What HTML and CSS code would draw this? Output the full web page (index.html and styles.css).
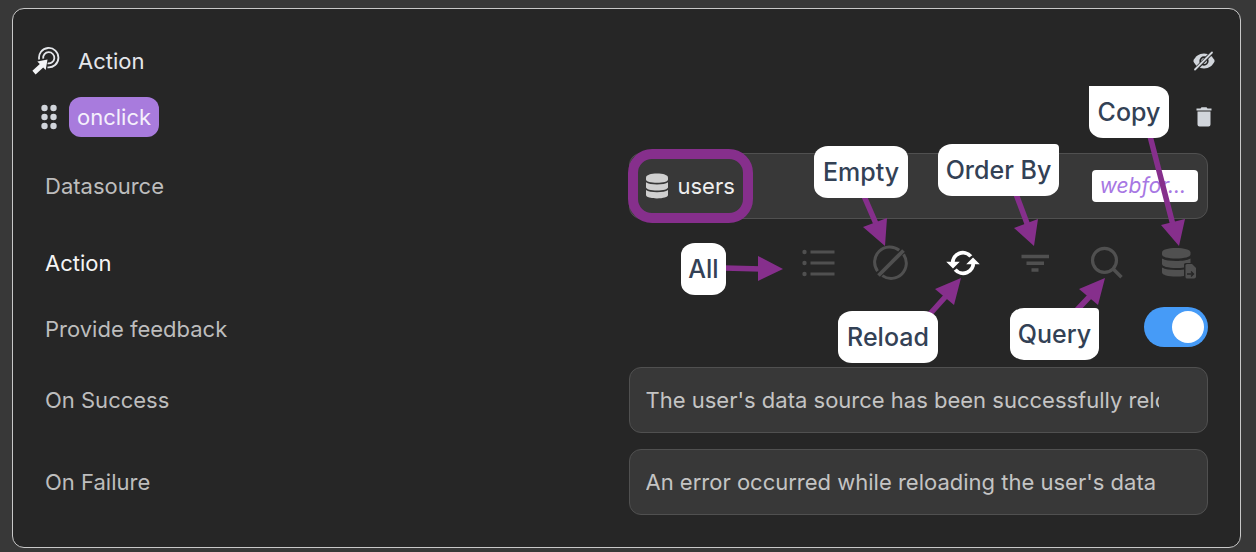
FILE: index.html
```html
<!DOCTYPE html>
<html lang="en">
<head>
<meta charset="utf-8">
<meta name="viewport" content="width=device-width, initial-scale=1">
<title>Action</title>
<link rel="stylesheet" href="styles.css">
</head>
<body>
<main class="panel">
  <header class="bar">
    <svg class="icon-target" viewBox="0 0 28 28" aria-hidden="true">
      <g fill="none" stroke="#e5e7eb" stroke-width="1.8">
        <path d="M7.200 12.500A9.700 9.700 0 1 1 15.500 20.300"/>
        <path d="M11.200 11.600A5.600 5.600 0 1 1 15.600 16.300"/>
      </g>
      <path fill="#f3f4f6" d="M15.500 12.600 5.300 14.600l2.500 2.300L.4 23.800l3.200 3.600 7.600-7 2.500 2.700z"/>
    </svg>
    <h1 class="bar-title">Action</h1>
    <button class="icon-button" type="button" aria-label="Hide">
      <svg width="22" height="20" viewBox="0 0 22 20" aria-hidden="true">
        <path fill="#d1d5db" d="M11 2.500c5 0 8.800 2.900 10.700 7.500-1.900 4.600-5.700 7.500-10.700 7.500S2.200 14.600.3 10C2.200 5.400 6 2.500 11 2.500z"/>
        <circle cx="11" cy="10" r="3.800" fill="none" stroke="#262626" stroke-width="1.700"/>
        <path stroke="#262626" stroke-width="3.800" d="M2 19 19.500 1"/>
        <path stroke="#d1d5db" stroke-width="1.800" stroke-linecap="round" d="M2 18.500 19 1.500"/>
      </svg>
    </button>
  </header>

  <div class="bar bar-event">
    <svg class="icon-grip" viewBox="0 0 16 26" fill="#d1d5db" aria-hidden="true">
      <circle cx="3.500" cy="4" r="3.200"/><circle cx="12.500" cy="4" r="3.200"/>
      <circle cx="3.500" cy="13" r="3.200"/><circle cx="12.500" cy="13" r="3.200"/>
      <circle cx="3.500" cy="22" r="3.200"/><circle cx="12.500" cy="22" r="3.200"/>
    </svg>
    <span class="event">onclick</span>
    <button class="icon-button" type="button" aria-label="Delete">
      <svg width="16" height="20" viewBox="0 0 16 20" fill="#d1d5db" aria-hidden="true">
        <path d="M.5 1.500H4.500L5.500.3h5l1 1.200h4v2H.5zM1.500 4.500h13V17.500a2 2 0 0 1-2 2h-9a2 2 0 0 1-2-2z"/>
      </svg>
    </button>
  </div>

  <form class="settings">
    <div class="row row-field">
      <span class="label">Datasource</span>
      <div class="field">
        <span class="source">
          <svg width="22" height="26" viewBox="0 0 22 26" fill="#d0d0d0" aria-hidden="true">
            <path d="M0 4.500C0 2 5 .5 11 .5S22 2 22 4.500v2C22 8.600 17 9.800 11 9.800S0 8.600 0 6.500z"/>
            <path d="M0 9.300c2 1.500 6 2.200 11 2.200s9-.7 11-2.200v5c0 2-5 3.300-11 3.300S0 16.300 0 14.300z"/>
            <path d="M0 17.100c2 1.500 6 2.200 11 2.200s9-.7 11-2.200v5c0 2-5 3.400-11 3.400S0 24.100 0 22.100z"/>
          </svg>
          users
        </span>
        <span class="chip">webfor...</span>
      </div>
    </div>

    <div class="row row-action">
      <span class="label label-strong">Action</span>
      <div class="tools">
        <button class="tool" type="button" aria-label="All">
          <svg viewBox="0 0 36 36" aria-hidden="true">
            <g fill="currentColor"><circle cx="3.500" cy="7" r="2.200"/><circle cx="3.500" cy="18" r="2.200"/><circle cx="3.500" cy="29" r="2.200"/></g>
            <path stroke="currentColor" stroke-width="2.800" d="M9.500 7h24M9.500 18h24M9.500 29h24"/>
          </svg>
        </button>
        <button class="tool" type="button" aria-label="Empty">
          <svg viewBox="0 0 36 36" fill="none" stroke="currentColor" stroke-width="3" aria-hidden="true">
            <path d="M26.200 5.200A15.200 15.200 0 0 0 4.600 26.200M9.300 30.600A15.200 15.200 0 0 0 30.500 9.400"/>
            <path stroke-width="3.800" d="M5.500 30.500 30.500 5.500"/>
          </svg>
        </button>
        <button class="tool tool-active" type="button" aria-label="Reload">
          <svg viewBox="0 0 36 36" aria-hidden="true">
            <g fill="none" stroke="currentColor" stroke-width="3.800">
              <path d="M7.800 19A10.200 10.200 0 0 1 25.800 11.400"/>
              <path d="M28.200 17A10.200 10.200 0 0 1 10.200 24.600"/>
            </g>
            <path fill="currentColor" d="M1.200 16.800h13.600L8 23.600zM21.200 19.200h13.600L28 12.400z"/>
          </svg>
        </button>
        <button class="tool" type="button" aria-label="Order By">
          <svg viewBox="0 0 36 36" stroke="currentColor" stroke-width="3.600" aria-hidden="true">
            <path d="M4.500 11.500h27.500M9.500 18.200h17.500M14.500 25h7"/>
          </svg>
        </button>
        <button class="tool" type="button" aria-label="Query">
          <svg viewBox="0 0 36 36" fill="none" stroke="currentColor" aria-hidden="true">
            <circle cx="15.500" cy="15.300" r="12" stroke-width="3.200"/>
            <path stroke-width="3.600" d="M24 23.800 32.500 32.300"/>
          </svg>
        </button>
        <button class="tool" type="button" aria-label="Copy">
          <svg viewBox="0 0 36 36" fill="currentColor" aria-hidden="true">
            <path d="M1 7.500C1 4.500 7 3 15 3s14.500 1.500 14.500 4.500v2c0 2.400-6 4-14.500 4S1 11.900 1 9.500z"/>
            <path d="M1 13.500c3 1.800 8 2.500 14 2.500s11.500-.7 14.500-2.500v4.500H25c-1.500 0-2 .8-2 2v2.500c-2.400.5-5 .6-8 .6-8 0-14-1.600-14-4z"/>
            <path d="M1 22.500c3 1.800 8 2.500 14 2.500 3 0 5.600-.2 8-.6v6.500c-2.400.5-5 .7-8 .7-8 0-14-1.700-14-4.100z"/>
            <path d="M26 19h5l4 4v8.500a2 2 0 0 1-2 2h-7a1.500 1.500 0 0 1-1.500-1.500V20.500A1.500 1.500 0 0 1 26 19z"/>
            <path fill="none" stroke="#262626" stroke-width="1.300" d="M26 29h6.500M30 26.500l2.500 2.500L30 31.500"/>
          </svg>
        </button>
      </div>
    </div>

    <div class="row row-toggle">
      <label class="label" for="feedback">Provide feedback</label>
      <input class="toggle" id="feedback" type="checkbox" role="switch" checked>
    </div>

    <div class="row row-field">
      <label class="label" for="success">On Success</label>
      <input class="field field-text" id="success" type="text" value="The user's data source has been successfully reloaded">
    </div>

    <div class="row row-field">
      <label class="label" for="failure">On Failure</label>
      <input class="field field-text" id="failure" type="text" value="An error occurred while reloading the user's data">
    </div>
  </form>

  <div class="notes">
    <svg class="arrows" viewBox="613 9 627 537" aria-hidden="true">
      <g stroke="#862f8c" stroke-width="5.500">
        <path d="M724 268 762 269M864 196 877 226M1016 194 1028 226M1150 136 1173 225M929 315 947 295M1076 311 1092 294"/>
      </g>
      <path fill="#862f8c" d="M758 256 783 269 758 281zM863 227 887 218 885 246zM1014 228 1038 219 1034 246zM1161 225 1185 219 1179 246zM935 289 961 278 954 305zM1079 289 1105 278 1098 305z"/>
    </svg>
    <span class="note note-all">All</span>
    <span class="note note-empty">Empty</span>
    <span class="note note-order">Order By</span>
    <span class="note note-copy">Copy</span>
    <span class="note note-reload">Reload</span>
    <span class="note note-query">Query</span>
  </div>
</main>
</body>
</html>
```
FILE: styles.css
```css
* {
  box-sizing: border-box;
}

body {
  margin: 0;
  padding: 8px 15px 4px 12px;
  background: #383838;
  color: #bdbdbd;
  font: 22px/32px Inter, "Open Sans", sans-serif;
}

button,
input {
  margin: 0;
  font: inherit;
  color: inherit;
}

button {
  padding: 0;
  border: 0;
  background: none;
}

svg {
  display: block;
  flex: none;
}

.panel {
  position: relative;
  display: flex;
  flex-direction: column;
  gap: 16px;
  padding: 32px 24px 32px 19px;
  border: 1px solid #c8c8c8;
  border-radius: 12px;
  background: #262626;
}

.bar {
  display: flex;
  align-items: center;
  gap: 18px;
  height: 40px;
}

.bar-event {
  gap: 12px;
  padding-left: 9px;
}

.bar-title {
  margin: 0;
  color: #e5e7eb;
  font-size: 22px;
  font-weight: 400;
}

.icon-target {
  width: 28px;
  height: 28px;
}

.icon-grip {
  width: 16px;
  height: 26px;
}

.icon-button {
  display: grid;
  place-items: center;
  width: 24px;
  height: 24px;
  margin-left: auto;
}

.event {
  padding: 4px 8px;
  border-radius: 12px;
  background: #a87bdd;
  color: #f5f0fc;
}

.settings {
  display: flex;
  flex-direction: column;
  gap: 16px;
  padding: 0 8px 0 13px;
}

.row {
  display: grid;
  grid-template-columns: 1fr 1fr;
  column-gap: 4px;
  align-items: center;
}

.row-field {
  min-height: 66px;
}

.row-action {
  min-height: 56px;
}

.row-toggle {
  min-height: 44px;
}

.label-strong {
  color: #f5f5f5;
}

.field {
  display: flex;
  align-items: center;
  justify-content: space-between;
  width: 100%;
  height: 66px;
  padding: 0 9px 0 16px;
  border: 1px solid #505050;
  border-radius: 12px;
  background: #383838;
}

.field-text {
  padding-right: 48px;
  color: #c4c4c4;
}

.source {
  position: relative;
  display: flex;
  align-items: center;
  gap: 10px;
  color: #eee;
}

.source::after {
  content: "";
  position: absolute;
  inset: -21px -18px;
  border: 10px solid #862f8c;
  border-radius: 24px;
}

.chip {
  padding: 0 12px 0 8px;
  border-radius: 4px;
  background: #fff;
  color: #a777e3;
  font-size: 21px;
  font-style: italic;
}

.tools {
  display: flex;
  justify-content: flex-end;
  gap: 36px;
  padding-right: 11px;
}

.tool {
  width: 36px;
  height: 36px;
  color: #505050;
}

.tool-active {
  color: #fff;
}

.toggle {
  appearance: none;
  place-self: start end;
  display: flex;
  justify-content: flex-end;
  width: 64px;
  height: 40px;
  padding: 4px;
  border-radius: 20px;
  background: #469bf7;
}

.toggle::before {
  content: "";
  width: 32px;
  height: 32px;
  border-radius: 50%;
  background: #fff;
}

.toggle:not(:checked) {
  justify-content: flex-start;
  background: #505050;
}

.notes {
  position: absolute;
  top: 0;
  right: 0;
  width: 627px;
  height: 537px;
  pointer-events: none;
}

.arrows {
  width: 627px;
  height: 537px;
}

.note {
  position: absolute;
  height: 52px;
  border-radius: 14px / 12px;
  background: #fff;
  color: #334155;
  font-size: 25px;
  font-weight: 500;
  line-height: 52px;
  text-align: center;
}

.note-all {
  left: 68px;
  top: 234px;
  width: 45px;
}

.note-empty {
  left: 201px;
  top: 137px;
  width: 94px;
}

.note-order {
  left: 325px;
  top: 135px;
  width: 121px;
  border-top-right-radius: 4px;
}

.note-copy {
  left: 476px;
  top: 77px;
  width: 80px;
  border-top-left-radius: 0;
}

.note-reload {
  left: 225px;
  top: 302px;
  width: 100px;
}

.note-query {
  left: 397px;
  top: 299px;
  width: 89px;
  border-top-right-radius: 4px;
}
```
